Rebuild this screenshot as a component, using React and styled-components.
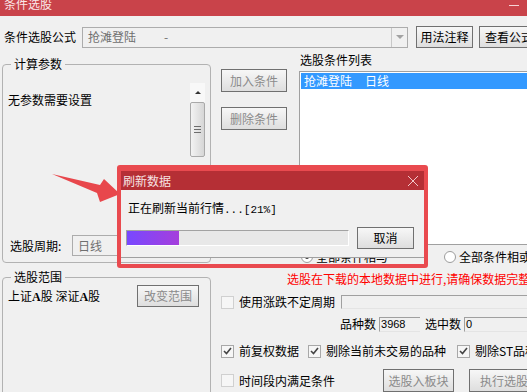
import styled, { createGlobalStyle } from "styled-components";

const GlobalStyle = createGlobalStyle`
  html, body {
    margin: 0;
    padding: 0;
    background: #f0f0f0;
  }
  body {
    font-family: "Noto Sans CJK SC", "Liberation Sans", sans-serif;
    font-size: 12px;
    color: #000;
  }
  * {
    box-sizing: border-box;
  }
`;

const Window = styled.div`
  position: relative;
  width: 527px;
  height: 392px;
  overflow: hidden;
  background: #f0f0f0;
  line-height: 14px;
`;

const TitleBar = styled.div`
  display: flex;
  justify-content: space-between;
  height: 16px;
  padding: 0 8px 0 4px;
  background: #c9434a;
  overflow: hidden;
`;
const TitleText = styled.span`
  margin-top: -3px;
  line-height: 14px;
  color: #fbe7e8;
`;
const MinGlyph = styled.span`
  width: 10px;
  height: 1px;
  margin-top: 5px;
  background: #f6d3d5;
`;

const FormulaRow = styled.div`
  display: flex;
  align-items: center;
  height: 22px;
  margin-top: 10px;
  padding-left: 4px;
`;
const Label = styled.span`
  flex-shrink: 0;
  width: ${(p) => (p.$w ? `${p.$w}px` : "auto")};
  white-space: nowrap;
  line-height: 14px;
`;

const Combo = styled.div`
  display: flex;
  flex-shrink: 0;
  width: ${(p) => p.$w}px;
  height: ${(p) => p.$h || 21}px;
  margin-left: ${(p) => p.$ml || 0}px;
  border: 1px solid #acacac;
  background: #f0f0f0;
  color: #6f6f6f;
`;
const ComboText = styled.div`
  flex: 1;
  display: flex;
  align-items: center;
  padding-left: 5px;
  white-space: pre;
`;
const ComboArrow = styled.div`
  display: flex;
  align-items: center;
  justify-content: center;
  width: 16px;
  border-left: 1px solid #c8c8c8;
  &::after {
    content: "";
    border-left: 4px solid transparent;
    border-right: 4px solid transparent;
    border-top: 4px solid #a2a2a2;
  }
`;

const Button = styled.button`
  flex-shrink: 0;
  width: ${(p) => p.$w}px;
  height: ${(p) => p.$h || 22}px;
  margin: 0 0 0 ${(p) => p.$ml || 0}px;
  padding: 0;
  border: 1px solid #707070;
  border-radius: 0;
  background: linear-gradient(#f7f7f7, #dedede);
  font-family: inherit;
  font-size: 12px;
  line-height: 14px;
  white-space: nowrap;
  color: ${(p) => (p.$disabled ? "#8b8b8b" : "#000")};
`;

const Upper = styled.div`
  display: flex;
  height: 210px;
  margin-top: 5px;
  padding-left: 2px;
`;

const Group = styled.fieldset`
  flex-shrink: 0;
  width: 209px;
  height: ${(p) => p.$h}px;
  min-width: 0;
  margin: ${(p) => p.$mt}px 0 0 0;
  padding: 0;
  border: 1px solid #b2b2b2;
  border-radius: 4px;
`;
const Legend = styled.legend`
  margin-left: 8px;
  padding: 0 3px;
  line-height: 14px;
`;
const GroupBody = styled.div`
  display: flex;
  flex-direction: column;
  height: ${(p) => p.$h}px;
`;

const ParamRow = styled.div`
  display: flex;
  justify-content: space-between;
  padding: 12px 5px 0 5px;
`;
const ParamText = styled.span`
  margin-top: 10px;
`;

const ScrollBar = styled.div`
  display: flex;
  flex-direction: column;
  width: 15px;
  height: 74px;
  background: #f8f8f8;
`;
const ScrollArrow = styled.div`
  display: flex;
  align-items: center;
  justify-content: center;
  height: 19px;
  &::after {
    content: "";
    border-left: 3px solid transparent;
    border-right: 3px solid transparent;
    border-bottom: 3px solid #333;
  }
`;
const ScrollThumb = styled.div`
  flex: 1;
  display: flex;
  align-items: center;
  justify-content: center;
  border: 1px solid #a9a9a9;
  border-radius: 2px;
  background: linear-gradient(90deg, #f3f3f3, #d6d6d6);
`;
const Grip = styled.span`
  width: 7px;
  height: 7px;
  background: repeating-linear-gradient(#6d6d6d 0 1px, transparent 1px 3px);
`;

const PeriodRow = styled.div`
  display: flex;
  align-items: center;
  margin-top: auto;
  padding: 0 0 6px 7px;
`;

const ButtonCol = styled.div`
  display: flex;
  flex-direction: column;
  gap: 15px;
  margin-left: 10px;
  padding-top: 16px;
`;

const ListCol = styled.div`
  display: flex;
  flex: 1;
  flex-direction: column;
  margin-left: 12px;
  min-width: 0;
`;
const ListLabel = styled.div`
  padding-left: 1px;
`;
const ListBox = styled.div`
  flex-shrink: 0;
  height: 174px;
  margin-top: 4px;
  padding: 1px 0 0 1px;
  border: 1px solid #a0a0a0;
  border-right: none;
  background: #fff;
`;
const SelectedRow = styled.div`
  display: flex;
  height: 16px;
  padding-left: 3px;
  background: #3399ff;
  color: #fff;
  line-height: 16px;
  span + span {
    margin-left: 13px;
  }
`;
const RadioRow = styled.div`
  display: flex;
  flex-shrink: 0;
  align-items: center;
  height: 18px;
  margin-top: 3px;
  padding-left: 2px;
  color: #000;
`;
const RadioItem = styled.div`
  display: flex;
  align-items: center;
  gap: 3px;
  margin-left: ${(p) => p.$ml || 0}px;
  white-space: nowrap;
`;
const Radio = styled.span`
  display: inline-flex;
  align-items: center;
  justify-content: center;
  width: 12px;
  height: 12px;
  border: 1px solid #9c9c9c;
  border-radius: 50%;
  background: #fff;
  &::after {
    content: "";
    width: 4px;
    height: 4px;
    border-radius: 50%;
    background: ${(p) => (p.$on ? "#333" : "transparent")};
  }
`;

const Lower = styled.div`
  display: flex;
  padding-left: 2px;
`;
const RangeRow = styled.div`
  display: flex;
  align-items: center;
  margin-top: 1px;
  padding: 0 11px 0 5px;
`;
const Latin = styled.span`
  font-family: "Liberation Serif", serif;
  font-weight: bold;
`;

const OptionPanel = styled.div`
  display: flex;
  flex: 1;
  flex-direction: column;
  margin-left: 10px;
  min-width: 0;
`;
const Notice = styled.div`
  margin-top: 9px;
  padding-left: 66px;
  color: #ff0000;
  white-space: nowrap;
`;
const OptionRow = styled.div`
  display: flex;
  align-items: center;
  height: ${(p) => p.$h || 16}px;
  margin-top: ${(p) => p.$mt}px;
  padding-left: ${(p) => p.$pl || 0}px;
  white-space: nowrap;
`;
const CheckItem = styled.label`
  display: flex;
  flex-shrink: 0;
  align-items: center;
  gap: 5px;
  margin-left: ${(p) => p.$ml || 0}px;
`;
const Box = styled.span`
  display: inline-flex;
  align-items: center;
  justify-content: center;
  width: 13px;
  height: 13px;
  border: 1px solid ${(p) => (p.$on ? "#a8a8a8" : "#d0d0d0")};
  background: #f6f6f6;
`;
const Field = styled.div`
  flex: ${(p) => (p.$w ? "none" : "1")};
  width: ${(p) => (p.$w ? `${p.$w}px` : "auto")};
  height: ${(p) => p.$h || 14}px;
  margin-left: ${(p) => p.$ml || 0}px;
  padding-left: 1px;
  border-top: 1px solid #a0a0a0;
  border-left: 1px solid #a0a0a0;
  border-bottom: 1px solid #e4e4e4;
  background: #f0f0f0;
  font-family: "Liberation Sans", sans-serif;
  font-size: 11px;
  line-height: 13px;
`;
const RowGap = styled.span`
  width: ${(p) => p.$w}px;
  flex-shrink: 0;
`;

const Arrow = styled.svg`
  position: absolute;
  left: 40px;
  top: 160px;
`;

const Frame = styled.div`
  position: absolute;
  left: 117px;
  top: 165px;
  width: 311px;
  height: 103px;
  border: 4px solid #e94a4f;
  border-top-width: 6px;
  border-radius: 3px;
`;
const Dialog = styled.div`
  display: flex;
  flex-direction: column;
  height: 87px;
  border-bottom: 1px solid #a0a0a0;
  background: #f0f0f0;
`;
const DialogTitle = styled.div`
  display: flex;
  align-items: center;
  justify-content: space-between;
  height: 19px;
  padding: 0 5px 0 2px;
  background: #b52f35;
  color: #f7e3e4;
`;
const DialogText = styled.div`
  margin: 11px 0 0 7px;
`;
const Mono = styled.span`
  font-family: "Liberation Mono", monospace;
  font-size: 11px;
`;
const ProgressRow = styled.div`
  display: flex;
  align-items: center;
  margin-top: 10px;
  padding-left: 5px;
`;
const Progress = styled.div`
  width: 223px;
  height: 16px;
  border: 1px solid;
  border-color: #a2a2a2 #fff #fff #a2a2a2;
  background: #e8e8e8;
`;
const ProgressFill = styled.div`
  height: 100%;
  background: linear-gradient(90deg, #7848ff, #a53edc);
`;

const CheckMark = () => (
  <svg width="9" height="8" viewBox="0 0 9 8">
    <polyline points="1,4 3.5,6.5 8,1" fill="none" stroke="#444" strokeWidth="1.6" />
  </svg>
);

const Check = ({ on, ml, children }) => (
  <CheckItem $ml={ml}>
    <Box $on={on}>{on && <CheckMark />}</Box>
    {children}
  </CheckItem>
);

const App = () => {
  const progress = 52;

  return (
    <Window>
      <GlobalStyle />
      <TitleBar>
        <TitleText>条件选股</TitleText>
        <MinGlyph />
      </TitleBar>

      <FormulaRow>
        <Label>条件选股公式</Label>
        <Combo $w={326} $ml={6}>
          <ComboText>
            抢滩登陆<span style={{ marginLeft: 28 }}>-</span>
          </ComboText>
          <ComboArrow />
        </Combo>
        <Button $w={57} $ml={8}>用法注释</Button>
        <Button $w={60} $ml={6}>查看公式</Button>
      </FormulaRow>

      <Upper>
        <Group $h={206} $mt={4}>
          <Legend>计算参数</Legend>
          <GroupBody $h={191}>
            <ParamRow>
              <ParamText>无参数需要设置</ParamText>
              <ScrollBar>
                <ScrollArrow />
                <ScrollThumb>
                  <Grip />
                </ScrollThumb>
              </ScrollBar>
            </ParamRow>
            <PeriodRow>
              <Label $w={62}>选股周期:</Label>
              <Combo $w={110} $h={21}>
                <ComboText>日线</ComboText>
              </Combo>
            </PeriodRow>
          </GroupBody>
        </Group>

        <ButtonCol>
          <Button $w={66} $h={23} $disabled>加入条件</Button>
          <Button $w={66} $h={23} $disabled>删除条件</Button>
        </ButtonCol>

        <ListCol>
          <ListLabel>选股条件列表</ListLabel>
          <ListBox>
            <SelectedRow>
              <span>抢滩登陆</span>
              <span>日线</span>
            </SelectedRow>
          </ListBox>
          <RadioRow>
            <RadioItem>
              <Radio $on />
              全部条件相与
            </RadioItem>
            <RadioItem $ml={56}>
              <Radio />
              全部条件相或
            </RadioItem>
          </RadioRow>
        </ListCol>
      </Upper>

      <Lower>
        <Group $h={130} $mt={7}>
          <Legend>选股范围</Legend>
          <RangeRow>
            <span>
              上证<Latin>A</Latin>股 深证<Latin>A</Latin>股
            </span>
            <Button $w={62} $ml={0} $disabled style={{ marginLeft: "auto" }}>
              改变范围
            </Button>
          </RangeRow>
        </Group>

        <OptionPanel>
          <Notice>选股在下载的本地数据中进行,请确保数据完整</Notice>
          <OptionRow $mt={8}>
            <Check>使用涨跌不定周期</Check>
            <Field $ml={6} />
          </OptionRow>
          <OptionRow $mt={6} $pl={119}>
            <Label>品种数</Label>
            <Field $w={41} $h={15} $ml={3}>3968</Field>
            <Label style={{ marginLeft: 5 }}>选中数</Label>
            <Field $h={15} $ml={3}>0</Field>
          </OptionRow>
          <OptionRow $mt={11}>
            <Check on>前复权数据</Check>
            <Check on ml={9}>剔除当前未交易的品种</Check>
            <Check on ml={11}>剔除ST品种</Check>
          </OptionRow>
          <OptionRow $mt={10} $h={23}>
            <Check>时间段内满足条件</Check>
            <RowGap $w={48} />
            <Button $w={71} $h={23} $disabled>选股入板块</Button>
            <Button $w={70} $h={23} $ml={15} $disabled>执行选股</Button>
          </OptionRow>
        </OptionPanel>
      </Lower>

      <Arrow width="90" height="50" viewBox="0 0 90 50">
        <polygon points="12,14 60,25 64,19 80,34 60,42 57,33" fill="#e8474c" />
      </Arrow>

      <Frame>
        <Dialog>
          <DialogTitle>
            <span>刷新数据</span>
            <svg width="12" height="12" viewBox="0 0 12 12">
              <path d="M1 1 L11 11 M11 1 L1 11" stroke="#f1c6c8" strokeWidth="1" />
            </svg>
          </DialogTitle>
          <DialogText>
            正在刷新当前行情<Mono>...[21%]</Mono>
          </DialogText>
          <ProgressRow>
            <Progress>
              <ProgressFill style={{ width: progress }} />
            </Progress>
            <Button $w={57} $ml={8}>取消</Button>
          </ProgressRow>
        </Dialog>
      </Frame>
    </Window>
  );
};

export default App;
